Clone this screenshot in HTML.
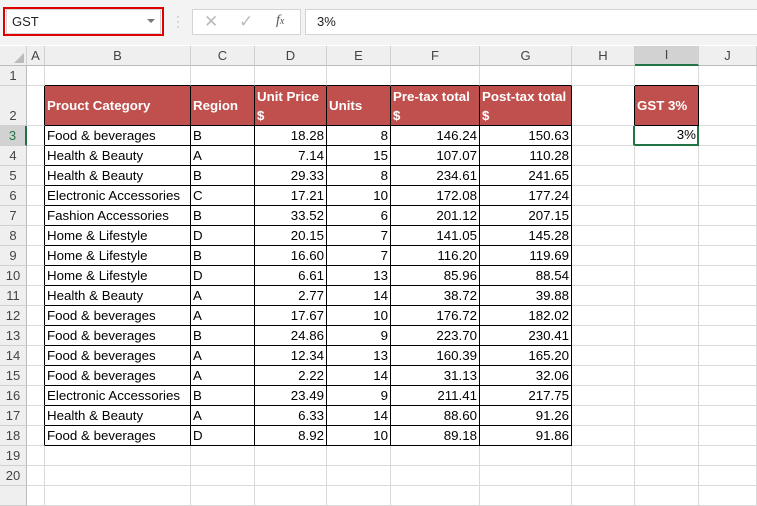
<!DOCTYPE html>
<html><head><meta charset="utf-8"><style>
body{margin:0;width:757px;height:490px;overflow:hidden;background:#fff;font-family:"Liberation Sans",sans-serif;position:relative}
#top{position:absolute;left:0;top:0;width:757px;height:45px;background:#f3f3f3}
.box{position:absolute;background:#fff;border:1px solid #d4d4d4;box-sizing:border-box}
table{position:absolute;left:0;top:46px;border-collapse:separate;border-spacing:0;table-layout:fixed;font-size:13.3px}
td{border-right:1px solid #dadada;border-bottom:1px solid #dadada;padding:0 2px;height:19px;white-space:nowrap;overflow:hidden;vertical-align:bottom;line-height:18px;color:#000}
td.rh{background:#efefef;color:#444;text-align:center;border-right:1px solid #bbb;border-bottom:1px solid #d0d0d0;font-size:13px}
tr.ch td{background:#efefef;color:#444;text-align:center;border-bottom:1px solid #bbb;border-right:1px solid #d0d0d0;vertical-align:middle;font-size:13px}
td.d{border-right:1px solid #000;border-bottom:1px solid #000}
td.n{text-align:right}
td.h{background:#c0504d;color:#fff;font-weight:bold;border-right:1px solid #000;border-bottom:1px solid #000;vertical-align:middle;white-space:normal;line-height:19px}
td.bb{border-bottom:1px solid #000}
td.br{border-right:1px solid #000}
</style></head><body>
<div id="top">
<div class="box" style="left:3px;top:7px;width:161px;height:29px;border:2px solid #e00000"></div>
<div class="box" style="left:6px;top:9px;width:155px;height:25px"></div>
<div style="position:absolute;left:12px;top:14px;font-size:13px;color:#222">GST</div>
<div style="position:absolute;left:147px;top:19px;width:0;height:0;border-left:4px solid transparent;border-right:4px solid transparent;border-top:4px solid #777"></div>
<div style="position:absolute;left:176px;top:14px;color:#aaa;font-size:12px;line-height:5px">·<br>·<br>·</div>
<div class="box" style="left:192px;top:9px;width:109px;height:26px"></div>
<div style="position:absolute;left:204px;top:12px;color:#bbb;font-size:17px">✕</div>
<div style="position:absolute;left:239px;top:12px;color:#bbb;font-size:17px">✓</div>
<div style="position:absolute;left:276px;top:13px;color:#555;font-size:14px;font-style:italic;font-family:'Liberation Serif',serif">f<span style="font-size:10px">x</span></div>
<div class="box" style="left:305px;top:9px;width:460px;height:26px"></div>
<div style="position:absolute;left:317px;top:14px;font-size:13px;color:#222">3%</div>
</div>
<table>
<colgroup><col style="width:27px"><col style="width:18px"><col style="width:146px"><col style="width:64px"><col style="width:72px"><col style="width:64px"><col style="width:89px"><col style="width:92px"><col style="width:63px"><col style="width:64px"><col style="width:58px"></colgroup>
<tr class="ch"><td style="background:#efefef"><div style="width:0;height:0;border-left:10px solid transparent;border-bottom:10px solid #bbb;margin-left:12px;margin-top:4px"></div></td><td>A</td><td>B</td><td>C</td><td>D</td><td>E</td><td>F</td><td>G</td><td>H</td><td style="background:#d2d2d2;border-bottom:2px solid #217346;height:18px">I</td><td>J</td></tr>
<tr><td class="rh">1</td><td></td><td class="bb"></td><td class="bb"></td><td class="bb"></td><td class="bb"></td><td class="bb"></td><td class="bb"></td><td></td><td class="bb"></td><td></td></tr>
<tr><td class="rh" style="height:39px">2</td><td class="br"></td><td class="h">Prouct Category</td><td class="h">Region</td><td class="h">Unit Price<br>$</td><td class="h">Units</td><td class="h">Pre-tax total<br>$</td><td class="h">Post-tax total<br>$</td><td class="br"></td><td class="h">GST 3%</td><td></td></tr>
<tr><td class="rh" style="background:#d2d2d2;border-right:2px solid #217346;color:#217346">3</td><td class="br"></td><td class="d">Food &amp; beverages</td><td class="d">B</td><td class="d n">18.28</td><td class="d n">8</td><td class="d n">146.24</td><td class="d n">150.63</td><td style="border-right:2px solid #217346"></td><td class="n" style="border-bottom:2px solid #217346;border-right:2px solid #217346;height:18px;padding-right:1px">3%</td><td></td></tr>
<tr><td class="rh">4</td><td class="br"></td><td class="d">Health &amp; Beauty</td><td class="d">A</td><td class="d n">7.14</td><td class="d n">15</td><td class="d n">107.07</td><td class="d n">110.28</td><td></td><td></td><td></td></tr>
<tr><td class="rh">5</td><td class="br"></td><td class="d">Health &amp; Beauty</td><td class="d">B</td><td class="d n">29.33</td><td class="d n">8</td><td class="d n">234.61</td><td class="d n">241.65</td><td></td><td></td><td></td></tr>
<tr><td class="rh">6</td><td class="br"></td><td class="d">Electronic Accessories</td><td class="d">C</td><td class="d n">17.21</td><td class="d n">10</td><td class="d n">172.08</td><td class="d n">177.24</td><td></td><td></td><td></td></tr>
<tr><td class="rh">7</td><td class="br"></td><td class="d">Fashion Accessories</td><td class="d">B</td><td class="d n">33.52</td><td class="d n">6</td><td class="d n">201.12</td><td class="d n">207.15</td><td></td><td></td><td></td></tr>
<tr><td class="rh">8</td><td class="br"></td><td class="d">Home &amp; Lifestyle</td><td class="d">D</td><td class="d n">20.15</td><td class="d n">7</td><td class="d n">141.05</td><td class="d n">145.28</td><td></td><td></td><td></td></tr>
<tr><td class="rh">9</td><td class="br"></td><td class="d">Home &amp; Lifestyle</td><td class="d">B</td><td class="d n">16.60</td><td class="d n">7</td><td class="d n">116.20</td><td class="d n">119.69</td><td></td><td></td><td></td></tr>
<tr><td class="rh">10</td><td class="br"></td><td class="d">Home &amp; Lifestyle</td><td class="d">D</td><td class="d n">6.61</td><td class="d n">13</td><td class="d n">85.96</td><td class="d n">88.54</td><td></td><td></td><td></td></tr>
<tr><td class="rh">11</td><td class="br"></td><td class="d">Health &amp; Beauty</td><td class="d">A</td><td class="d n">2.77</td><td class="d n">14</td><td class="d n">38.72</td><td class="d n">39.88</td><td></td><td></td><td></td></tr>
<tr><td class="rh">12</td><td class="br"></td><td class="d">Food &amp; beverages</td><td class="d">A</td><td class="d n">17.67</td><td class="d n">10</td><td class="d n">176.72</td><td class="d n">182.02</td><td></td><td></td><td></td></tr>
<tr><td class="rh">13</td><td class="br"></td><td class="d">Food &amp; beverages</td><td class="d">B</td><td class="d n">24.86</td><td class="d n">9</td><td class="d n">223.70</td><td class="d n">230.41</td><td></td><td></td><td></td></tr>
<tr><td class="rh">14</td><td class="br"></td><td class="d">Food &amp; beverages</td><td class="d">A</td><td class="d n">12.34</td><td class="d n">13</td><td class="d n">160.39</td><td class="d n">165.20</td><td></td><td></td><td></td></tr>
<tr><td class="rh">15</td><td class="br"></td><td class="d">Food &amp; beverages</td><td class="d">A</td><td class="d n">2.22</td><td class="d n">14</td><td class="d n">31.13</td><td class="d n">32.06</td><td></td><td></td><td></td></tr>
<tr><td class="rh">16</td><td class="br"></td><td class="d">Electronic Accessories</td><td class="d">B</td><td class="d n">23.49</td><td class="d n">9</td><td class="d n">211.41</td><td class="d n">217.75</td><td></td><td></td><td></td></tr>
<tr><td class="rh">17</td><td class="br"></td><td class="d">Health &amp; Beauty</td><td class="d">A</td><td class="d n">6.33</td><td class="d n">14</td><td class="d n">88.60</td><td class="d n">91.26</td><td></td><td></td><td></td></tr>
<tr><td class="rh">18</td><td class="br"></td><td class="d">Food &amp; beverages</td><td class="d">D</td><td class="d n">8.92</td><td class="d n">10</td><td class="d n">89.18</td><td class="d n">91.86</td><td></td><td></td><td></td></tr>
<tr><td class="rh">19</td><td></td><td></td><td></td><td></td><td></td><td></td><td></td><td></td><td></td><td></td></tr>
<tr><td class="rh">20</td><td></td><td></td><td></td><td></td><td></td><td></td><td></td><td></td><td></td><td></td></tr>
<tr><td class="rh"></td><td></td><td></td><td></td><td></td><td></td><td></td><td></td><td></td><td></td><td></td></tr>
</table>
</body></html>
